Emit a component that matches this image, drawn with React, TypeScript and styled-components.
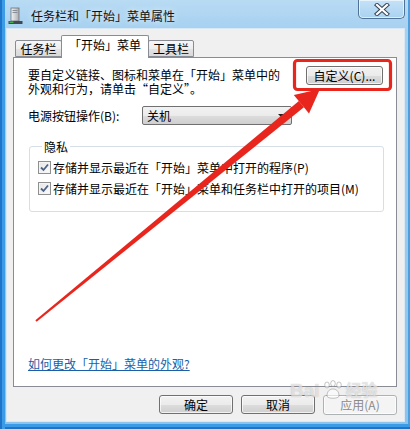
import React from "react";
import styled, { createGlobalStyle } from "styled-components";

const Global = createGlobalStyle`
  html, body { margin: 0; padding: 0; }
  body {
    width: 410px; height: 429px; overflow: hidden; background: #fff;
    font-family: "Noto Sans CJK SC", "Noto Sans", sans-serif;
  }
`;

const Window = styled.div`
  position: relative;
  width: 410px;
  height: 429px;
  box-sizing: border-box;
  display: flex;
  flex-direction: column;
  background: linear-gradient(180deg, #b9dbf4 0px, #a6d1f0 28px, #9bcbee 50%, #8cc3ec 100%);
  box-shadow: inset 2px 0 0 #1d74c8, inset 5px 0 0 #3c9be6, inset 0 -2px 0 #1d74c8, inset 0 -5px 0 #3c9be6, inset -2px 0 0 #4a9fe0;
`;

const TitleBar = styled.div`
  height: 29px;
  display: flex;
  align-items: flex-start;
  padding-left: 8px;
  box-sizing: border-box;
`;

const TitleIcon = styled.svg`
  width: 16px;
  height: 18px;
  margin-top: 7px;
  flex: none;
`;

const TitleText = styled.span`
  margin-left: 7px;
  margin-top: 9px;
  font-size: 12px;
  line-height: 14px;
  color: #111;
  text-shadow: 0 0 6px rgba(255,255,255,0.9);
`;

const CloseButton = styled.div`
  margin-left: auto;
  margin-right: 5px;
  width: 47px;
  height: 19px;
  box-sizing: border-box;
  border: 1px solid #4f7397;
  border-top: none;
  border-radius: 0 0 5px 5px;
  background: linear-gradient(180deg, #c5e2f7 0%, #a9d2f1 100%);
  box-shadow: inset 0 0 0 1px rgba(255,255,255,0.6);
  display: flex;
  align-items: center;
  justify-content: center;
`;

const Client = styled.div`
  flex: 1;
  margin: 0 6px 8px 7px;
  background: #f0f0f0;
  padding: 6px 7px 6px 6px;
  display: flex;
  flex-direction: column;
  box-shadow: 0 0 0 1px #d9e8f5;
`;

const TabStrip = styled.div`
  height: 22px;
  display: flex;
  align-items: flex-end;
  padding-left: 2px;
  position: relative;
  z-index: 1;
`;

const Tab = styled.div<{ $active?: boolean; $w: number }>`
  width: ${(p) => p.$w}px;
  height: ${(p) => (p.$active ? 23 : 17)}px;
  margin-bottom: ${(p) => (p.$active ? -1 : 0)}px;
  box-sizing: border-box;
  border: 1px solid #898c95;
  border-bottom: ${(p) => (p.$active ? "none" : "1px solid #898c95")};
  border-radius: 2px 2px 0 0;
  background: ${(p) => (p.$active ? "#fff" : "linear-gradient(180deg, #f6f6f6 0%, #eeeeee 50%, #e3e3e3 51%, #d9d9d9 100%)")};
  font-size: 12px;
  line-height: ${(p) => (p.$active ? 18 : 15)}px;
  text-align: center;
  color: #000;
  & + & { margin-left: -1px; }
`;

const Panel = styled.div`
  height: 330px;
  box-sizing: border-box;
  background: #fff;
  border: 1px solid #898c95;
  display: flex;
  flex-direction: column;
  padding-bottom: 16px;
`;

const TopRow = styled.div`
  display: flex;
  justify-content: space-between;
  align-items: flex-start;
  padding: 8px 13px 0 14px;
`;

const Description = styled.div`
  margin-top: 2px;
  font-size: 12px;
  line-height: 14px;
  color: #000;
  white-space: nowrap;
`;

const Button = styled.div<{ $w: number; $disabled?: boolean }>`
  width: ${(p) => p.$w}px;
  height: ${(p) => (p.$disabled ? 20 : 19)}px;
  box-sizing: border-box;
  border: 1px solid ${(p) => (p.$disabled ? "#adb2b5" : "#707070")};
  border-radius: 3px;
  background: ${(p) =>
    p.$disabled
      ? "#f4f4f4"
      : "linear-gradient(180deg, #f2f2f2 0%, #ebebeb 50%, #dddddd 51%, #cfcfcf 100%)"};
  box-shadow: inset 0 0 0 1px rgba(255,255,255,0.7);
  color: ${(p) => (p.$disabled ? "#8a8a8a" : "#000")};
  font-size: 12px;
  line-height: ${(p) => (p.$disabled ? 18 : 17)}px;
  text-align: center;
  white-space: nowrap;
`;

const PowerRow = styled.div`
  display: flex;
  align-items: center;
  margin-top: 10px;
  padding-left: 14px;
  height: 19px;
`;

const PowerLabel = styled.span`
  width: 114px;
  font-size: 12px;
  line-height: 13px;
  color: #000;
  white-space: nowrap;
`;

const Select = styled.div`
  width: 150px;
  height: 19px;
  box-sizing: border-box;
  border: 1px solid #707070;
  border-radius: 2px;
  background: linear-gradient(180deg, #f2f2f2 0%, #ebebeb 50%, #dddddd 51%, #cfcfcf 100%);
  display: flex;
  align-items: center;
  padding-left: 4px;
  font-size: 12px;
  line-height: 13px;
  color: #000;
`;

const SelectArrow = styled.span`
  margin-left: auto;
  margin-right: 5px;
  width: 0;
  height: 0;
  border-left: 4px solid transparent;
  border-right: 4px solid transparent;
  border-top: 4px solid #222;
`;

const Group = styled.fieldset`
  margin: 15px 12px 0 15px;
  padding: 8px 0 16px 8px;
  border: 1px solid #d5dfe5;
  border-radius: 3px;
  display: flex;
  flex-direction: column;
  gap: 8px;
`;

const Legend = styled.legend`
  padding: 0 2px;
  margin-left: 4px;
  font-size: 12px;
  line-height: 13px;
  color: #000;
`;

const CheckRow = styled.div`
  display: flex;
  align-items: center;
  height: 13px;
  font-size: 12px;
  line-height: 13px;
  color: #000;
  white-space: nowrap;
`;

const CheckBox = styled.span`
  width: 13px;
  height: 13px;
  box-sizing: border-box;
  border: 1px solid #8e8f8f;
  background: linear-gradient(135deg, #e6e6e6 0%, #fbfbfb 100%);
  box-shadow: inset 0 0 0 1px #f4f4f4;
  margin-right: 2px;
  display: flex;
  align-items: center;
  justify-content: center;
  flex: none;
`;

const Link = styled.a`
  margin-top: auto;
  margin-left: 14px;
  font-size: 12px;
  line-height: 13px;
  color: #1a5fa8;
  text-decoration: underline;
  align-self: flex-start;
`;

const ButtonRow = styled.div`
  margin-top: 8px;
  height: 20px;
  display: flex;
  justify-content: flex-end;
  gap: 8px;
`;

const Overlay = styled.svg`
  position: absolute;
  left: 0;
  top: 0;
  width: 410px;
  height: 429px;
  pointer-events: none;
`;

const Watermark = styled.div`
  position: absolute;
  left: 290px;
  top: 380px;
  display: flex;
  align-items: center;
  gap: 2px;
  pointer-events: none;
`;

const WatermarkText = styled.span<{ $size: number }>`
  font-family: "Liberation Sans", "Noto Sans CJK SC", sans-serif;
  font-size: ${(p) => p.$size}px;
  line-height: 15px;
  font-weight: bold;
  color: rgba(255,255,255,0.6);
  text-shadow: 0 0 1px rgba(110,110,110,0.5);
`;

const Check = () => (
  <svg width="9" height="9" viewBox="0 0 9 9">
    <path d="M1 4.5 L3.5 7 L8 1.5" fill="none" stroke="#4d6185" strokeWidth="1.8" />
  </svg>
);

export default function App() {
  const tail = { x: 36, y: 321 };
  const tip = { x: 320, y: 89 };
  const dx = tip.x - tail.x;
  const dy = tip.y - tail.y;
  const len = Math.hypot(dx, dy);
  const ux = dx / len, uy = dy / len;
  const nx = -uy, ny = ux;
  const headLen = 24, headHalf = 12;
  const bx = tip.x - ux * headLen, by = tip.y - uy * headLen;
  const shaft = [
    [tail.x + nx * 1, tail.y + ny * 1],
    [bx + nx * 4, by + ny * 4],
    [bx - nx * 4, by - ny * 4],
    [tail.x - nx * 1, tail.y - ny * 1],
  ];
  const head = [
    [tip.x, tip.y],
    [bx + nx * headHalf, by + ny * headHalf],
    [bx - nx * headHalf, by - ny * headHalf],
  ];
  const pts = (a: number[][]) => a.map((p) => p.join(",")).join(" ");

  return (
    <>
      <Global />
      <Window>
        <TitleBar>
          <TitleIcon viewBox="0 0 16 18">
            <defs>
              <linearGradient id="tw" x1="0" x2="1">
                <stop offset="0" stopColor="#f4f4f4" />
                <stop offset="1" stopColor="#a9adb2" />
              </linearGradient>
            </defs>
            <rect x="3" y="1" width="8" height="13" fill="url(#tw)" stroke="#6b7078" strokeWidth="0.8" />
            <rect x="4.5" y="3" width="5" height="1" fill="#8a9098" />
            <rect x="4.5" y="5" width="5" height="1" fill="#8a9098" />
            <rect x="0.5" y="14" width="14" height="3" fill="#3f4a55" />
            <rect x="1.5" y="14.5" width="4" height="1.5" fill="#44b04a" />
          </TitleIcon>
          <TitleText>任务栏和「开始」菜单属性</TitleText>
          <CloseButton>
            <svg width="16" height="13" viewBox="0 0 16 13">
              <path d="M3 2 L13 11 M13 2 L3 11" stroke="#3a4656" strokeWidth="4.2" strokeLinecap="square" />
              <path d="M3 2 L13 11 M13 2 L3 11" stroke="#ffffff" strokeWidth="2.2" strokeLinecap="square" />
            </svg>
          </CloseButton>
        </TitleBar>
        <Client>
          <TabStrip>
            <Tab $w={47}>任务栏</Tab>
            <Tab $w={88} $active>「开始」菜单</Tab>
            <Tab $w={46}>工具栏</Tab>
          </TabStrip>
          <Panel>
            <TopRow>
              <Description>
                要自定义链接、图标和菜单在「开始」菜单中的
                <br />
                外观和行为，请单击“自定义”。
              </Description>
              <Button $w={77}>自定义(C)...</Button>
            </TopRow>
            <PowerRow>
              <PowerLabel>电源按钮操作(B):</PowerLabel>
              <Select>
                关机
                <SelectArrow />
              </Select>
            </PowerRow>
            <Group>
              <Legend>隐私</Legend>
              <CheckRow>
                <CheckBox><Check /></CheckBox>
                存储并显示最近在「开始」菜单中打开的程序(P)
              </CheckRow>
              <CheckRow>
                <CheckBox><Check /></CheckBox>
                存储并显示最近在「开始」菜单和任务栏中打开的项目(M)
              </CheckRow>
            </Group>
            <Link href="#">如何更改「开始」菜单的外观?</Link>
          </Panel>
          <ButtonRow>
            <Button $w={74}>确定</Button>
            <Button $w={74}>取消</Button>
            <Button $w={74} $disabled>应用(A)</Button>
          </ButtonRow>
        </Client>
        <Watermark>
          <WatermarkText $size={19}>Bai</WatermarkText>
          <svg width="22" height="20" viewBox="0 0 22 20">
            <g fill="rgba(255,255,255,0.6)" stroke="rgba(110,110,110,0.5)" strokeWidth="0.8">
              <ellipse cx="5" cy="5" rx="2.3" ry="3" />
              <ellipse cx="11" cy="3.5" rx="2.3" ry="3" />
              <ellipse cx="17" cy="5" rx="2.3" ry="3" />
              <path d="M5 16 C5 10 9 9 11 9 C13 9 17 10 17 16 C17 19 5 19 5 16 Z" />
            </g>
          </svg>
          <WatermarkText $size={16}>经验</WatermarkText>
        </Watermark>
        <Overlay viewBox="0 0 410 429">
          <rect x="294.5" y="60.5" width="96" height="29" rx="3" fill="none" stroke="#e8261d" strokeWidth="3.2" />
          <polygon points={pts(shaft)} fill="#e8261d" />
          <polygon points={pts(head)} fill="#e8261d" />
        </Overlay>
      </Window>
    </>
  );
}
